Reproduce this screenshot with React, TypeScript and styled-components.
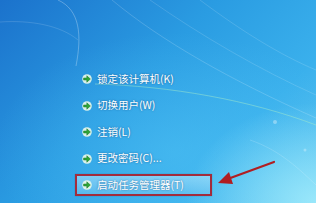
import * as React from "react";
import styled, { createGlobalStyle } from "styled-components";

const GlobalStyle = createGlobalStyle`
  html, body {
    margin: 0;
    padding: 0;
  }
  body {
    font-family: "Noto Sans CJK SC", "Liberation Sans", sans-serif;
  }
`;

const Screen = styled.div`
  position: relative;
  width: 316px;
  height: 203px;
  overflow: hidden;
  background:
    radial-gradient(ellipse 130px 100px at 100% 100%, rgba(160, 235, 252, 0.9), rgba(160, 235, 252, 0) 100%),
    radial-gradient(ellipse 180px 120px at 55% 75%, rgba(80, 195, 245, 0.5), rgba(80, 195, 245, 0) 100%),
    linear-gradient(135deg, #1b72cc 0%, #2a9ce2 42%, #3ab0ec 72%, #62c8f0 100%);
`;

const Swooshes = styled.svg`
  position: absolute;
  left: 0;
  top: 0;
  pointer-events: none;
`;

const Menu = styled.ul`
  list-style: none;
  margin: 0;
  padding: 68px 0 0 75px;
  display: flex;
  flex-direction: column;
  gap: 4.5px;
  position: relative;
`;

const Item = styled.li<{ $active?: boolean }>`
  box-sizing: border-box;
  height: 22px;
  width: 137px;
  display: flex;
  align-items: center;
  gap: 5px;
  padding-left: 5px;
  border: 2px solid ${(p) => (p.$active ? "#a22c3c" : "transparent")};
  background: ${(p) =>
    p.$active
      ? "linear-gradient(to bottom, rgba(175,228,252,0.6), rgba(120,200,242,0.5))"
      : "transparent"};
  box-shadow: ${(p) => (p.$active ? "0 0 1px rgba(0,0,0,0.3)" : "none")};
`;

const Label = styled.span`
  color: #ffffff;
  font-size: 10.5px;
  line-height: 1;
  white-space: nowrap;
  text-shadow: 0 0 2px rgba(0, 40, 90, 0.6);
`;

const Pointer = styled.svg`
  position: absolute;
  left: 0;
  top: 0;
  pointer-events: none;
`;

function GoIcon() {
  return (
    <svg width="10" height="10" viewBox="0 0 10 10">
      <circle cx="5" cy="5" r="4.8" fill="#eaf8ea" opacity="0.9" />
      <path
        d="M1.6 4 H4.8 V1.8 L8.4 5 L4.8 8.2 V6 H1.6 Z"
        fill="#2ea43a"
        stroke="#1d7a26"
        strokeWidth="0.5"
        strokeLinejoin="round"
      />
    </svg>
  );
}

const items = [
  "锁定该计算机(K)",
  "切换用户(W)",
  "注销(L)",
  "更改密码(C)...",
  "启动任务管理器(T)",
];

export default function App(): JSX.Element {
  return (
    <Screen>
      <GlobalStyle />
      <Swooshes width="316" height="203" viewBox="0 0 316 203">
        <path d="M58 0 C 80 10, 82 35, 76 66" stroke="rgba(255,255,255,0.35)" strokeWidth="0.8" fill="none" />
        <path d="M0 22 C 30 20, 60 25, 78 40" stroke="rgba(255,255,255,0.18)" strokeWidth="0.8" fill="none" />
        <path d="M112 0 C 160 40, 230 80, 316 118" stroke="rgba(255,255,255,0.22)" strokeWidth="0.8" fill="none" />
        <path d="M150 0 C 200 35, 260 70, 316 95" stroke="rgba(255,255,255,0.18)" strokeWidth="0.8" fill="none" />
        <path d="M200 0 C 240 30, 280 55, 316 70" stroke="rgba(255,255,255,0.18)" strokeWidth="0.8" fill="none" />
        <path d="M95 84 C 170 86, 250 100, 316 125" stroke="rgba(170,240,200,0.45)" strokeWidth="1" fill="none" />
        <path d="M250 140 C 280 150, 300 170, 316 185" stroke="rgba(255,255,255,0.2)" strokeWidth="0.8" fill="none" />
        <circle cx="275" cy="122" r="2" fill="rgba(255,255,255,0.35)" />
        <circle cx="305" cy="150" r="1.5" fill="rgba(255,255,255,0.3)" />
      </Swooshes>
      <Menu>
        {items.map((text, i) => (
          <Item key={text} $active={i === items.length - 1}>
            <GoIcon />
            <Label>{text}</Label>
          </Item>
        ))}
      </Menu>
      <Pointer width="316" height="203" viewBox="0 0 316 203">
        <line x1="274" y1="162" x2="229" y2="178.5" stroke="#b01e22" strokeWidth="2.2" strokeLinecap="round" />
        <polygon points="218,183 229,172 233,184" fill="#b01e22" />
      </Pointer>
    </Screen>
  );
}
